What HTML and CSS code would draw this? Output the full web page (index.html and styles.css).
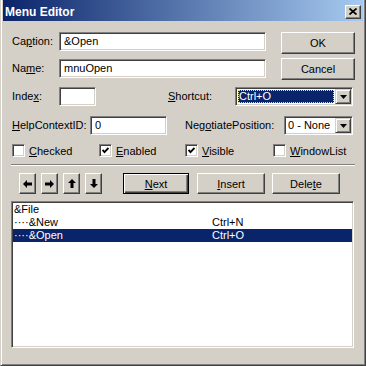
FILE: index.html
```html
<!DOCTYPE html>
<html>
<head>
<meta charset="utf-8">
<link rel="stylesheet" href="styles.css">
</head>
<body>
<div class="window">
  <div class="titlebar">
    <span class="title">Menu Editor</span>
    <span class="close"><svg width="8" height="7" viewBox="0 0 8 7"><path d="M0.5 0.5 L7.5 6.5 M7.5 0.5 L0.5 6.5" stroke="#000" stroke-width="1.7" fill="none"/></svg></span>
  </div>
  <div class="body">
    <div class="row r1">
      <span class="lbl w47">Ca<u>p</u>tion:</span>
      <div class="edit e-caption">&amp;Open</div>
      <div class="btn b-ok">OK</div>
    </div>
    <div class="row r2">
      <span class="lbl w47 m1">Na<u>m</u>e:</span>
      <div class="edit e-name m1">mnuOpen</div>
      <div class="btn b-cancel">Cancel</div>
    </div>
    <div class="row r3">
      <span class="lbl w47">Inde<u>x</u>:</span>
      <div class="edit e-index"></div>
      <span class="lbl l-shortcut"><u>S</u>hortcut:</span>
      <div class="combo c-shortcut">
        <div class="ctext"><span class="selbox">Ctrl+O</span></div>
        <div class="drop"><svg width="7" height="4" viewBox="0 0 7 4"><path d="M0 0 H7 L3.5 4 Z" fill="#000"/></svg></div>
      </div>
    </div>
    <div class="row r4">
      <span class="lbl l-help"><u>H</u>elpContextID:</span>
      <div class="edit e-help">0</div>
      <span class="lbl l-neg">Neg<u>o</u>tiatePosition:</span>
      <div class="combo c-neg">
        <div class="ctext plain">0 - None</div>
        <div class="drop"><svg width="7" height="4" viewBox="0 0 7 4"><path d="M0 0 H7 L3.5 4 Z" fill="#000"/></svg></div>
      </div>
    </div>
    <div class="row r5">
      <div class="ck w87"><span class="chk"></span><span><u>C</u>hecked</span></div>
      <div class="ck w86"><span class="chk"><svg width="7" height="7" viewBox="0 0 7 7"><polyline points="0.5,3 2.5,5.2 6.5,1" stroke="#000" stroke-width="1.9" fill="none"/></svg></span><span><u>E</u>nabled</span></div>
      <div class="ck w88"><span class="chk"><svg width="7" height="7" viewBox="0 0 7 7"><polyline points="0.5,3 2.5,5.2 6.5,1" stroke="#000" stroke-width="1.9" fill="none"/></svg></span><span><u>V</u>isible</span></div>
      <div class="ck"><span class="chk"></span><span><u>W</u>indowList</span></div>
    </div>
    <div class="sep"></div>
    <div class="row r6">
      <div class="btn abtn a1"><svg width="9" height="8" viewBox="0 0 9 8"><polygon points="0,4 4,0 4,2.5 9,2.5 9,5.5 4,5.5 4,8" fill="#000"/></svg></div>
      <div class="btn abtn"><svg width="9" height="8" viewBox="0 0 9 8"><polygon points="9,4 5,0 5,2.5 0,2.5 0,5.5 5,5.5 5,8" fill="#000"/></svg></div>
      <div class="btn abtn"><svg width="8" height="9" viewBox="0 0 8 9"><polygon points="4,0 8,4 5.5,4 5.5,9 2.5,9 2.5,4 0,4" fill="#000"/></svg></div>
      <div class="btn abtn"><svg width="8" height="9" viewBox="0 0 8 9"><polygon points="4,9 8,5 5.5,5 5.5,0 2.5,0 2.5,5 0,5" fill="#000"/></svg></div>
      <div class="btn default b-next"><u>N</u>ext</div>
      <div class="btn b-insert"><u>I</u>nsert</div>
      <div class="btn b-delete">Dele<u>t</u>e</div>
    </div>
    <div class="list">
      <div class="li"><span class="c1">&amp;File</span><span></span></div>
      <div class="li"><span class="c1">····&amp;New</span><span>Ctrl+N</span></div>
      <div class="li sel"><span class="c1">····&amp;Open</span><span>Ctrl+O</span></div>
    </div>
  </div>
</div>
</body>
</html>
```

FILE: styles.css
```css
html, body {
  margin: 0;
  padding: 0;
  background: #d4d0c8;
}
body {
  font: 11px "Liberation Sans", Arial, sans-serif;
  color: #000;
}
.window {
  width: 366px;
  height: 366px;
  box-sizing: border-box;
  background: #d4d0c8;
  border-left: 1px solid #d4d0c8;
  border-right: 1px solid #404040;
  border-bottom: 1px solid #404040;
  box-shadow: inset 1px 0 #fff, inset -1px -1px #808080;
  padding: 0 2px 2px 2px;
}
.titlebar {
  height: 21px;
  box-sizing: border-box;
  display: flex;
  align-items: center;
  justify-content: space-between;
  padding: 0 2px 0 2px;
  background: linear-gradient(90deg, #0a246a 0%, #a6caf0 100%);
  color: #fff;
  font-weight: bold;
  font-size: 12px;
}
.title { padding-top: 2px; }
.close {
  width: 16px;
  height: 14px;
  box-sizing: border-box;
  margin-top: 2px;
  background: #d4d0c8;
  border: 1px solid;
  border-color: #fff #404040 #404040 #fff;
  box-shadow: inset -1px -1px #808080;
  display: flex;
  align-items: center;
  justify-content: center;
}
.body { padding-left: 9px; }
.row { display: flex; align-items: flex-start; }
.lbl { height: 19px; line-height: 19px; white-space: nowrap; }
.w47 { width: 47px; }
.m1 { margin-top: 1px; }
.edit {
  height: 19px;
  box-sizing: border-box;
  background: #fff;
  border: 1px solid;
  border-color: #808080 #fff #fff #808080;
  box-shadow: inset 1px 1px #404040, inset -1px -1px #d4d0c8;
  padding: 0 4px;
  line-height: 17px;
  white-space: nowrap;
}
.btn {
  box-sizing: border-box;
  height: 22px;
  background: #d4d0c8;
  border: 1px solid;
  border-color: #fff #404040 #404040 #fff;
  box-shadow: inset -1px -1px #808080;
  display: flex;
  align-items: center;
  justify-content: center;
  white-space: nowrap;
}
.btn.default {
  border-color: #000;
  box-shadow: inset 1px 1px #fff, inset -1px -1px #404040, inset -2px -2px #808080;
}
.r1 { margin-top: 11px; }
.e-caption { width: 207px; }
.b-ok { width: 74px; margin-left: 15px; }
.r2 { margin-top: 4px; }
.e-name { width: 207px; }
.b-cancel { width: 74px; margin-left: 15px; }
.r3 { margin-top: 7px; }
.e-index { width: 37px; }
.l-shortcut { margin-left: 72px; width: 67px; }
.combo {
  height: 19px;
  box-sizing: border-box;
  background: #fff;
  border: 1px solid;
  border-color: #808080 #fff #fff #808080;
  box-shadow: inset 1px 1px #404040, inset -1px -1px #d4d0c8;
  padding: 1px;
  display: flex;
}
.c-shortcut { width: 118px; }
.ctext {
  flex: 1;
  display: flex;
  padding: 1px;
  line-height: 13px;
}
.ctext.plain { padding: 1px 2px; }
.selbox {
  flex: 1;
  background: #0a246a;
  color: #fff;
  outline: 1px dotted #e8e0a0;
  outline-offset: -1px;
  padding-left: 1px;
}
.drop {
  width: 16px;
  height: 15px;
  box-sizing: border-box;
  background: #d4d0c8;
  border: 1px solid;
  border-color: #d4d0c8 #404040 #404040 #d4d0c8;
  box-shadow: inset 1px 1px #fff, inset -1px -1px #808080;
  display: flex;
  align-items: center;
  justify-content: center;
}
.r4 { margin-top: 10px; }
.l-help { width: 78px; }
.e-help { width: 77px; }
.l-neg { margin-left: 18px; width: 99px; }
.c-neg { width: 69px; }
.r5 { margin-top: 9px; align-items: center; height: 13px; }
.ck { display: flex; align-items: center; gap: 4px; white-space: nowrap; }
.w87 { width: 87px; }
.w86 { width: 86px; }
.w88 { width: 88px; }
.chk {
  width: 13px;
  height: 13px;
  box-sizing: border-box;
  background: #fff;
  border: 1px solid;
  border-color: #808080 #fff #fff #808080;
  box-shadow: inset 1px 1px #404040, inset -1px -1px #d4d0c8;
  display: flex;
  align-items: center;
  justify-content: center;
}
.sep {
  margin: 7px 0 0 -1px;
  width: 344px;
  border-top: 1px solid #808080;
  border-bottom: 1px solid #fff;
}
.r6 { margin-top: 7px; }
.r6 .btn { height: 21px; }
.abtn { width: 17px; margin-left: 5px; }
.abtn.a1 { margin-left: 7px; }
.b-next { width: 66px; margin-left: 21px; }
.b-insert { width: 68px; margin-left: 8px; }
.b-delete { width: 68px; margin-left: 7px; }
.list {
  margin: 7px 0 0 -1px;
  width: 343px;
  height: 147px;
  box-sizing: border-box;
  background: #fff;
  border: 1px solid;
  border-color: #808080 #fff #fff #808080;
  box-shadow: inset 1px 1px #404040, inset -1px -1px #d4d0c8;
  padding: 1px;
}
.li {
  display: flex;
  height: 13px;
  line-height: 13px;
  padding-left: 1px;
  white-space: nowrap;
}
.li .c1 { width: 198px; }
.li.sel { background: #0a246a; color: #fff; }
```
